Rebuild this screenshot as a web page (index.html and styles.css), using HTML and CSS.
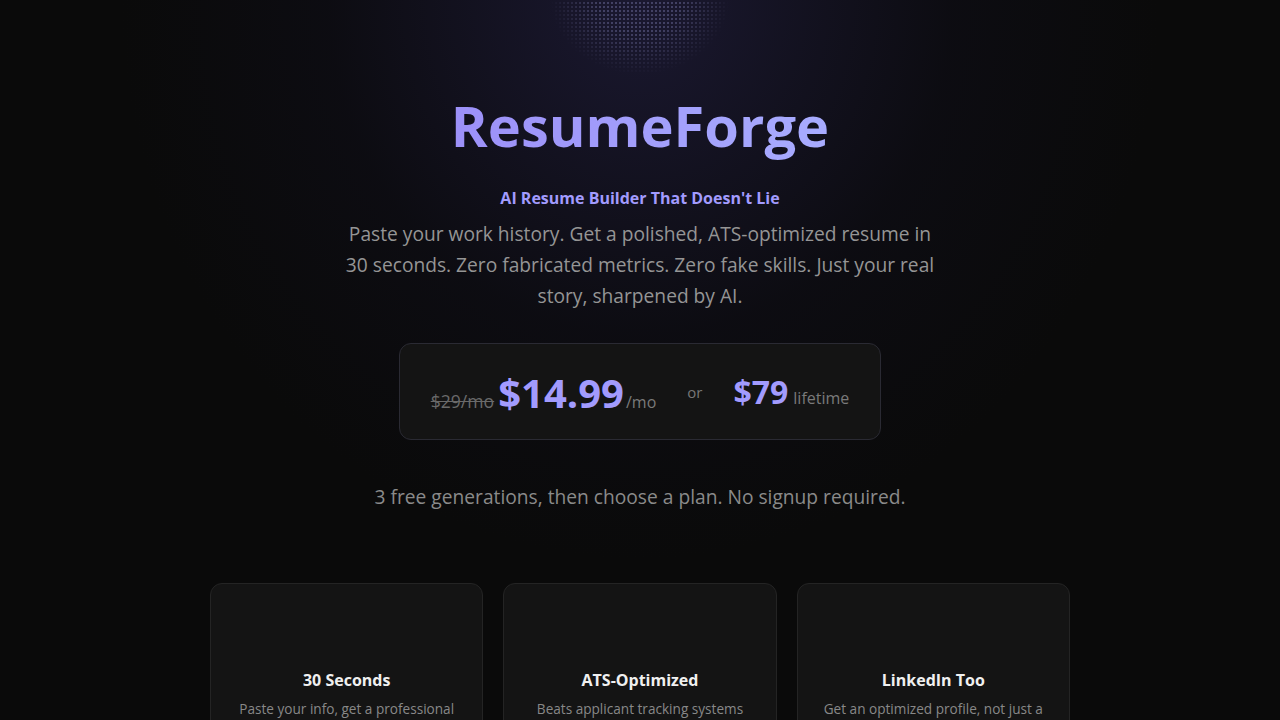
FILE: index.html
```html
<!DOCTYPE html>
<html lang="en">
<head>
    <meta charset="UTF-8">
    <title>ResumeForge</title>
    <link rel="stylesheet" href="styles.css">
</head>
<body>
    <div class="glow"></div>
    <header class="hero">
        <h1 class="logo">ResumeForge</h1>
        <p class="tagline">AI Resume Builder That Doesn't Lie</p>
        <p class="lead">Paste your work history. Get a polished, ATS-optimized resume in 30 seconds. Zero fabricated metrics. Zero fake skills. Just your real story, sharpened by AI.</p>

        <div class="pricing">
            <div class="plan">
                <span class="old">$29/mo</span>
                <span class="amount">$14.99</span>
                <span class="unit">/mo</span>
            </div>
            <span class="or">or</span>
            <div class="plan">
                <span class="amount small">$79</span>
                <span class="unit">lifetime</span>
            </div>
        </div>

        <p class="note">3 free generations, then choose a plan. No signup required.</p>
    </header>

    <section class="features">
        <div class="feature">
            <div class="icon"></div>
            <h3>30 Seconds</h3>
            <p>Paste your info, get a professional resume instantly.</p>
        </div>
        <div class="feature">
            <div class="icon"></div>
            <h3>ATS-Optimized</h3>
            <p>Beats applicant tracking systems with clean formatting.</p>
        </div>
        <div class="feature">
            <div class="icon"></div>
            <h3>LinkedIn Too</h3>
            <p>Get an optimized profile, not just a resume.</p>
        </div>
    </section>
</body>
</html>
```

FILE: styles.css
```css
* {
    box-sizing: border-box;
}
body {
    margin: 0;
    min-height: 100vh;
    background:
        radial-gradient(ellipse 520px 560px at 50% 0%, rgba(40, 36, 80, 0.55), rgba(20, 18, 40, 0.25) 60%, transparent 100%),
        #0a0a0a;
    color: #e5e5e5;
    font-family: 'Open Sans', 'Noto Sans', sans-serif;
    overflow: hidden;
}
/* dotted halftone at the top of the page */
.glow {
    position: absolute;
    top: 0;
    left: 50%;
    width: 180px;
    height: 150px;
    margin-left: -90px;
    margin-top: -75px;
    background-image: radial-gradient(circle, rgba(150, 150, 210, 0.45) 0.6px, transparent 1px);
    background-size: 4px 4px;
    -webkit-mask-image: radial-gradient(ellipse 50% 50% at 50% 50%, #000 45%, transparent 100%);
    mask-image: radial-gradient(ellipse 50% 50% at 50% 50%, #000 45%, transparent 100%);
    pointer-events: none;
}
.hero {
    display: flex;
    flex-direction: column;
    align-items: center;
    text-align: center;
    padding-top: 90px;
}
.logo {
    margin: 0;
    font-size: 3.5rem;
    line-height: 70px;
    font-weight: 700;
    background: linear-gradient(90deg, #9c90f8, #a8acff);
    -webkit-background-clip: text;
    background-clip: text;
    color: transparent;
}
.tagline {
    margin: 26px 0 0;
    font-size: 16px;
    line-height: 24px;
    font-weight: 700;
    color: #a29bfe;
}
.lead {
    margin: 8px 0 0;
    max-width: 600px;
    font-size: 1.2rem;
    line-height: 31px;
    color: #959595;
}
.pricing {
    margin-top: 32px;
    width: 482px;
    height: 97px;
    display: flex;
    align-items: center;
    justify-content: center;
    background: #141414;
    border: 1px solid #2a2a33;
    border-radius: 12px;
}
.plan {
    display: flex;
    align-items: baseline;
    padding-top: 2px;
}
.old {
    font-size: 1.1rem;
    color: #6a6a6a;
    text-decoration: line-through;
    margin-right: 4px;
}
.amount {
    font-size: 40px;
    font-weight: 700;
    color: #a29bfe;
    line-height: 1;
}
.amount.small {
    font-size: 32px;
}
.unit {
    font-size: 16px;
    color: #7a7a7a;
    margin-left: 2px;
}
.plan:last-child .unit {
    margin-left: 5px;
}
.or {
    font-size: 15px;
    color: #777;
    margin: 0 31px;
}
.note {
    margin: 43px 0 0;
    font-size: 1.2rem;
    line-height: 27px;
    color: #8a8a8a;
}
.features {
    width: 860px;
    margin: 73px auto 0;
    display: grid;
    grid-template-columns: repeat(3, 1fr);
    gap: 20px;
}
.feature {
    background: #141414;
    border: 1px solid #242424;
    border-radius: 12px;
    padding: 32px 24px;
    text-align: center;
}
.icon {
    height: 40px;
    margin-bottom: 12px;
}
.feature h3 {
    margin: 0 0 6px;
    font-size: 16px;
    line-height: 24px;
    font-weight: 700;
    color: #f0f0f0;
}
.feature p {
    margin: 0;
    font-size: 0.85rem;
    line-height: 22px;
    color: #888;
}
```
